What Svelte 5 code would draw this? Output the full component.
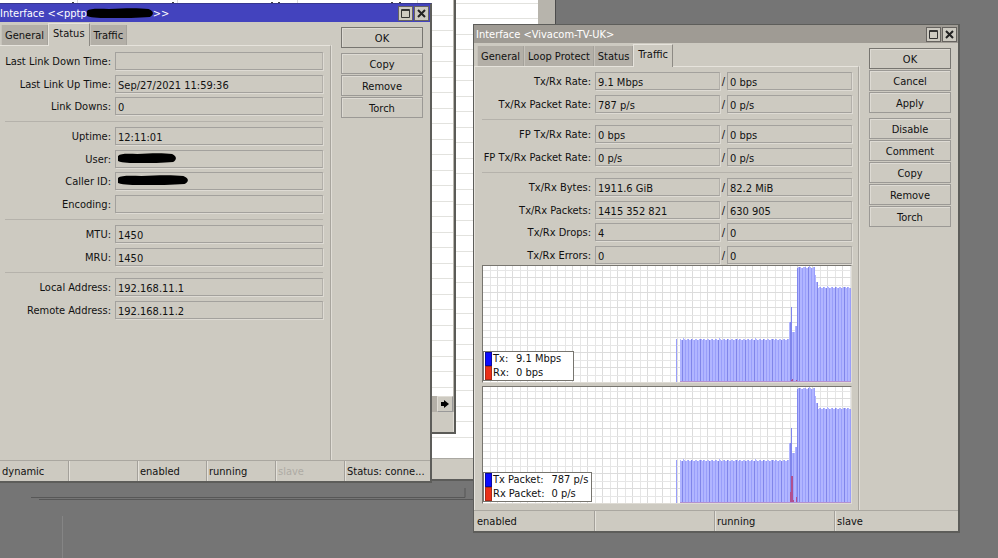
<script lang="ts">
	type Field = { id: string; label: string; value: string; redacted?: number };
	type Pair = { id: string; label: string; tx: string; rx: string };

	const pppGroups: Field[][] = [
		[
			{ id: 'down-time', label: 'Last Link Down Time:', value: '' },
			{ id: 'up-time', label: 'Last Link Up Time:', value: 'Sep/27/2021 11:59:36' },
			{ id: 'downs', label: 'Link Downs:', value: '0' }
		],
		[
			{ id: 'uptime', label: 'Uptime:', value: '12:11:01' },
			{ id: 'user', label: 'User:', value: '', redacted: 58 },
			{ id: 'caller', label: 'Caller ID:', value: '', redacted: 70 },
			{ id: 'encoding', label: 'Encoding:', value: '' }
		],
		[
			{ id: 'mtu', label: 'MTU:', value: '1450' },
			{ id: 'mru', label: 'MRU:', value: '1450' }
		],
		[
			{ id: 'local', label: 'Local Address:', value: '192.168.11.1' },
			{ id: 'remote', label: 'Remote Address:', value: '192.168.11.2' }
		]
	];

	const trafficGroups: Pair[][] = [
		[
			{ id: 'rate', label: 'Tx/Rx Rate:', tx: '9.1 Mbps', rx: '0 bps' },
			{ id: 'packet-rate', label: 'Tx/Rx Packet Rate:', tx: '787 p/s', rx: '0 p/s' }
		],
		[
			{ id: 'fp-rate', label: 'FP Tx/Rx Rate:', tx: '0 bps', rx: '0 bps' },
			{ id: 'fp-packet-rate', label: 'FP Tx/Rx Packet Rate:', tx: '0 p/s', rx: '0 p/s' }
		],
		[
			{ id: 'bytes', label: 'Tx/Rx Bytes:', tx: '1911.6 GiB', rx: '82.2 MiB' },
			{ id: 'packets', label: 'Tx/Rx Packets:', tx: '1415 352 821', rx: '630 905' },
			{ id: 'drops', label: 'Tx/Rx Drops:', tx: '4', rx: '0' },
			{ id: 'errors', label: 'Tx/Rx Errors:', tx: '0', rx: '0' }
		]
	];

	const charts = [
		{
			id: 'bits',
			legend: [['Tx:', '9.1 Mbps'], ['Rx:', '0 bps']],
			rx: [[308, 1], [309, 2], [313, 1]]
		},
		{
			id: 'packets',
			legend: [['Tx Packet:', '787 p/s'], ['Rx Packet:', '0 p/s']],
			rx: [[307, 10], [308, 26], [309, 26], [310, 2], [313, 5]]
		}
	];

	const pppButtons = [['OK'], ['Copy', 'Remove', 'Torch']];
	const trafficButtons = [['OK', 'Cancel', 'Apply'], ['Disable', 'Comment', 'Copy', 'Remove', 'Torch']];
	const pppStatus = ['dynamic', '', 'enabled', 'running', 'slave', 'Status: conne...'];
	const trafficStatus = ['enabled', '', 'running', 'slave'];

	let pppTab = $state('Status');
	let trafficTab = $state('Traffic');

	// height of the Tx bar in each one pixel column
	function level(x: number): number {
		if (x === 193) return 43;
		if (x < 197) return 0;
		const jitter = x % 18 === 2 ? 1 : 0;
		if (x < 306) return 42 + (x % 4 < 2 ? 1 : 0) + jitter;
		if (x < 308) return 60;
		if (x === 308) return 75;
		if (x < 312) return 50;
		if (x < 314) return 56;
		if (x < 332) return 114 + (x % 5 < 3 ? 1 : 0) + jitter;
		if (x === 332) return 107;
		if (x < 335) return 100;
		return 94 + (x % 4 < 2 ? 1 : 0) + jitter;
	}

	function shade(x: number): string {
		if (x === 308 || x === 314) return '#8086ee';
		if (x % 9 === 1) return '#8085ea';
		return x % 3 === 1 ? '#999efa' : '#b1b5ff';
	}

	const bars = Array.from({ length: 368 }, (_, x) => ({ x, h: level(x), fill: shade(x) })).filter((b) => b.h);
	const gridX = Array.from({ length: 49 }, (_, i) => 7 + Math.floor(i * 7.5));
	const gridY = Array.from({ length: 16 }, (_, i) => 4 + Math.floor(i * 7.5));
</script>

{#snippet windowButtons()}
	<button class="win-btn" aria-label="Maximize">
		<svg width="11" height="11" viewBox="0 0 11 11"><path d="M1.5 1.5h8v8h-8zM1 2.5h9" fill="none" stroke="#333" /></svg>
	</button>
	<button class="win-btn" aria-label="Close">
		<svg width="11" height="11" viewBox="0 0 11 11"><path d="M2 2l7 7M9 2l-7 7" stroke="#222" stroke-width="2" /></svg>
	</button>
{/snippet}

{#snippet actions(groups: string[][])}
	<div class="actions">
		{#each groups as group}
			<div class="action-group">
				{#each group as name}
					<button class="action" class:default={name === 'OK'}>{name}</button>
				{/each}
			</div>
		{/each}
	</div>
{/snippet}

{#snippet blob(width: number)}
	<svg class="blob" {width} height="11" viewBox="0 0 60 11" preserveAspectRatio="none" aria-hidden="true">
		<path d="M0 3C3 0 12 1 20 1C35 0 48 0 56 1C61 3 61 7 57 9C47 10 33 10 22 10C13 10 5 10 0 8Z" />
	</svg>
{/snippet}

<div class="desktop">
	<svg class="seams" width="480" height="80" aria-hidden="true">
		<path d="M31 17.5H465V8M39 19.5H480" fill="none" stroke="#575757" />
		<path d="M62.5 36V80" stroke="#858585" />
	</svg>

	<div class="back wide">
		<div class="sheet"></div>
		<div class="rail"></div>
		<div class="foot"></div>
	</div>

	<div class="back narrow">
		<div class="sheet columns">
			<svg width="440" height="4" aria-hidden="true">
				<path d="M77.5 0v4M177.5 0v4M297.5 0v4M417.5 0v4" stroke="#dcdcd8" />
				<path d="M72 2.5h2M172 2.5h2M271 2.5h2M278 2.5h2M391 2.5h2M399 2.5h2" stroke="#444" />
			</svg>
		</div>
		<div class="scroll">
			<button class="scroll-btn" aria-label="Scroll right">
				<svg width="10" height="10" viewBox="0 0 10 10"><path d="M1 3h3V1l5 4-5 4V7H1z" /></svg>
			</button>
		</div>
		<div class="bottom"></div>
	</div>

	<section class="window ppp">
		<header class="title">
			<span>Interface &lt;&lt;pptp</span>
			{@render blob(66)}
			<span class="grow">&gt;&gt;</span>
			{@render windowButtons()}
		</header>
		<div class="content">
			<div class="main">
				<div class="tabs">
					{#each ['General', 'Status', 'Traffic'] as tab}
						<button class="tab" class:active={tab === pppTab} onclick={() => (pppTab = tab)}>{tab}</button>
					{/each}
				</div>
				<div class="panel">
					{#each pppGroups as group, i}
						{#if i > 0}<hr />{/if}
						<div class="group">
							{#each group as f}
								<div class="row">
									<label for={f.id}>{f.label}</label>
									<div class="value">
										<input id={f.id} value={f.value} readonly />
										{#if f.redacted}<span class="cover">{@render blob(f.redacted)}</span>{/if}
									</div>
								</div>
							{/each}
						</div>
					{/each}
				</div>
			</div>
			{@render actions(pppButtons)}
		</div>
		<footer class="status">
			{#each pppStatus as s}
				<span class:dim={s === 'slave'}>{s}</span>
			{/each}
		</footer>
	</section>

	<section class="window traffic">
		<header class="title">
			<span class="grow">Interface &lt;Vivacom-TV-UK&gt;</span>
			{@render windowButtons()}
		</header>
		<div class="content">
			<div class="main">
				<div class="tabs">
					{#each ['General', 'Loop Protect', 'Status', 'Traffic'] as tab}
						<button class="tab" class:active={tab === trafficTab} onclick={() => (trafficTab = tab)}>{tab}</button>
					{/each}
				</div>
				<div class="panel">
					{#each trafficGroups as group, i}
						{#if i > 0}<hr />{/if}
						<div class="group">
							{#each group as p}
								<div class="row">
									<label for={p.id}>{p.label}</label>
									<div class="value pair">
										<input id={p.id} value={p.tx} readonly />
										<span>/</span>
										<input aria-label="{p.label} Rx" value={p.rx} readonly />
									</div>
								</div>
							{/each}
						</div>
					{/each}
					{#each charts as chart (chart.id)}
						<div class="chart">
							<svg viewBox="0 0 368 116" preserveAspectRatio="none" shape-rendering="crispEdges">
								{#each gridX as x, i}
									<rect {x} y="0" width="1" height="116" fill={i % 2 ? '#dcdcdc' : '#e6e6e6'} />
								{/each}
								{#each gridY as y, i}
									<rect x="0" {y} width="368" height="1" fill={i % 2 ? '#dcdcdc' : '#e6e6e6'} />
								{/each}
								{#each bars as b}
									<rect x={b.x} y={116 - b.h} width="1" height={b.h} fill={b.fill} />
								{/each}
								<rect x="197" y="115" width="171" height="1" fill="#b391cf" />
								{#each chart.rx as [x, h]}
									<rect {x} y={115 - h} width="1" height={h} fill="#b0508f" />
								{/each}
							</svg>
							<div class="legend">
								{#each chart.legend as [name, rate], i}
									<i class:rx={i === 1}></i><span>{name}</span><span class="rate">{rate}</span>
								{/each}
							</div>
						</div>
					{/each}
				</div>
			</div>
			{@render actions(trafficButtons)}
		</div>
		<footer class="status">
			{#each trafficStatus as s}
				<span>{s}</span>
			{/each}
		</footer>
	</section>
</div>

<style>
	:global(body) {
		margin: 0;
		background: #757575;
	}
	.desktop {
		position: relative;
		height: 100vh;
		overflow: hidden;
		background: #757575;
		color: #111;
		font-family: 'DejaVu Sans Condensed', 'DejaVu Sans', sans-serif;
		font-stretch: condensed;
		font-size: 11px;
		line-height: 16px;
	}
	button,
	input {
		box-sizing: border-box;
		margin: 0;
		color: inherit;
		font: inherit;
	}
	svg {
		display: block;
	}
	.seams {
		position: absolute;
		left: 0;
		top: 480px;
	}

	/* lists left open behind the dialogs */
	.back {
		position: absolute;
		left: 0;
		top: 0;
		box-sizing: border-box;
		display: grid;
	}
	.sheet {
		background: repeating-linear-gradient(#fff 0 15px, #e2e2de 15px 16px, #fff 16px 30px, #e2e2de 30px 31px);
	}
	.wide {
		width: 556px;
		height: 481px;
		grid-template: 1fr 21px / 1fr 17px;
		border-right: 1px solid #4c4c4c;
		border-bottom: 2px solid #5c5c5a;
	}
	.wide .sheet {
		background-position: 0 -12px;
	}
	.rail {
		background: #b7b4ac;
	}
	.foot {
		grid-column: 1 / 3;
		border-top: 1px solid #aaa8a2;
		background: #cdcac1;
	}
	.narrow {
		width: 456px;
		height: 434px;
		grid-template-rows: 1fr 16px 20px;
		border-right: 2px solid #5b5b57;
		border-bottom: 2px solid #5b5b57;
	}
	.columns {
		border-right: 1px solid #b8b5ad;
	}
	.scroll {
		display: flex;
		justify-content: flex-end;
		padding-right: 1px;
		background: #b3afa7;
	}
	.scroll-btn {
		display: grid;
		place-items: center;
		width: 16px;
		padding: 0;
		border: 1px solid #e0ddd6;
		border-right-color: #999;
		border-bottom-color: #999;
		background: #cdcac1;
	}
	.bottom {
		border-right: 1px solid #e0ddd6;
		background: #cdcac1;
	}

	.window {
		position: absolute;
		box-sizing: border-box;
		display: flex;
		flex-direction: column;
		background: #cdcac1;
		border: 1px solid #5d5d5a;
		border-right-width: 2px;
		border-bottom-width: 2px;
	}
	.ppp {
		left: 0;
		top: 3px;
		width: 432px;
		height: 480px;
		border-left: 0;
		border-top-color: #38388f;
	}
	.traffic {
		left: 473px;
		top: 24px;
		width: 487px;
		height: 509px;
	}
	.title {
		display: flex;
		align-items: center;
		height: 18px;
		padding-right: 1px;
		background: #4343be;
		color: #fff;
	}
	.title span {
		padding-top: 2px;
	}
	.traffic .title {
		padding-left: 2px;
		background: #9f9b94;
	}
	.grow {
		flex: 1;
	}
	.win-btn {
		display: grid;
		place-items: center;
		width: 15px;
		height: 15px;
		margin-left: 1px;
		padding: 0;
		border: 1px solid #e4e1da;
		outline: 1px solid #66635f;
		outline-offset: -1px;
		background: #cdcac1;
	}
	.content {
		flex: 1;
		display: flex;
	}
	.main {
		flex: 1;
		min-width: 0;
		display: flex;
		flex-direction: column;
	}
	.tabs {
		display: flex;
		align-items: flex-end;
		height: 23px;
		padding-left: 1px;
	}
	.traffic .tabs {
		padding-left: 3px;
	}
	.tab {
		height: 20px;
		padding: 2px 3px 0;
		border: 0;
		border-left: 1px solid #c6c2ba;
		border-right: 1px solid #a5a29b;
		background: #b3afa7;
	}
	.tab.active {
		height: 23px;
		margin-bottom: -1px;
		padding: 0 4px 2px;
		border-top: 1px solid #e6e3dc;
		border-left-color: #e6e3dc;
		border-right-color: #8d8a84;
		background: #cdcac1;
		z-index: 1;
	}
	.panel {
		flex: 1;
		padding: 6px 7px 0 5px;
		border-top: 1px solid #e6e3dc;
		border-right: 1px solid #a8a59e;
		box-shadow: 1px 0 #e0ddd6;
	}
	.traffic .panel {
		padding: 5px 6px 0 7px;
		border-left: 1px solid #e6e3dc;
	}
	.row {
		display: grid;
		grid-template-columns: 106px minmax(0, 1fr);
		column-gap: 4px;
	}
	.traffic .row {
		grid-template-columns: 109px minmax(0, 1fr);
	}
	.row + .row {
		margin-top: 4px;
	}
	.row:nth-child(even) {
		margin-top: 5px;
	}
	label,
	.pair span {
		padding-top: 2px;
		white-space: nowrap;
	}
	label {
		text-align: right;
	}
	.value {
		position: relative;
		display: flex;
	}
	.pair span {
		width: 7px;
		text-align: center;
	}
	input {
		flex: 1;
		min-width: 0;
		height: 18px;
		padding: 2px 2px 0;
		border: 1px solid #a3a19d;
		border-right-color: #b3b0aa;
		box-shadow: 1px 1px #dedbd4;
		background: transparent;
		outline: 0;
	}
	.cover {
		position: absolute;
		left: 3px;
		top: 3px;
	}
	hr {
		height: 1px;
		margin: 6px 0 5px;
		border: 0;
		background: #b5b2ab;
	}
	.chart {
		position: relative;
		margin-top: 1px;
		border: 1px solid #77756f;
		border-right-color: #dedbd4;
		border-bottom-color: #dedbd4;
		background: #fff;
	}
	.chart + .chart {
		margin-top: 3px;
	}
	.chart svg {
		width: 100%;
		height: 116px;
	}
	.legend {
		position: absolute;
		left: 0;
		bottom: 1px;
		display: grid;
		grid-template-columns: 7px auto auto;
		column-gap: 1px;
		padding: 0 12px 0 1px;
		border: 1px solid #77756f;
		background: #fff;
		line-height: 14px;
	}
	.chart + .chart .legend {
		padding-right: 3px;
	}
	.legend i {
		box-sizing: border-box;
		height: 14px;
		border: 1px solid #0a0aa0;
		background: #0c0cff;
	}
	.legend i.rx {
		border-color: #a82a18;
		background: #ea3018;
	}
	.rate {
		padding-left: 6px;
	}
	.actions {
		flex: none;
		display: flex;
		flex-direction: column;
		gap: 5px;
		width: 82px;
		padding: 5px 7px 0 10px;
	}
	.action-group {
		display: grid;
		gap: 1px;
	}
	.action {
		height: 21px;
		padding: 2px 0 0;
		border: 1px solid #9b9995;
		box-shadow: inset 1px 1px #dedbd4;
		background: #cdcac1;
	}
	.default {
		border-color: #777570;
	}
	.status {
		display: grid;
		grid-template-columns: repeat(5, 69px) 1fr;
		height: 20px;
		border-top: 1px solid #aaa7a0;
	}
	.traffic .status {
		grid-template-columns: repeat(3, 120px) 1fr;
		padding-left: 1px;
	}
	.status span {
		padding: 3px 0 0 2px;
		border-right: 1px solid #a3a09a;
		box-shadow: 1px 0 #e4e1da;
		white-space: nowrap;
	}
	.status span:last-child {
		border-right: 0;
		box-shadow: none;
	}
	.status .dim {
		color: #aeaba4;
	}
</style>
